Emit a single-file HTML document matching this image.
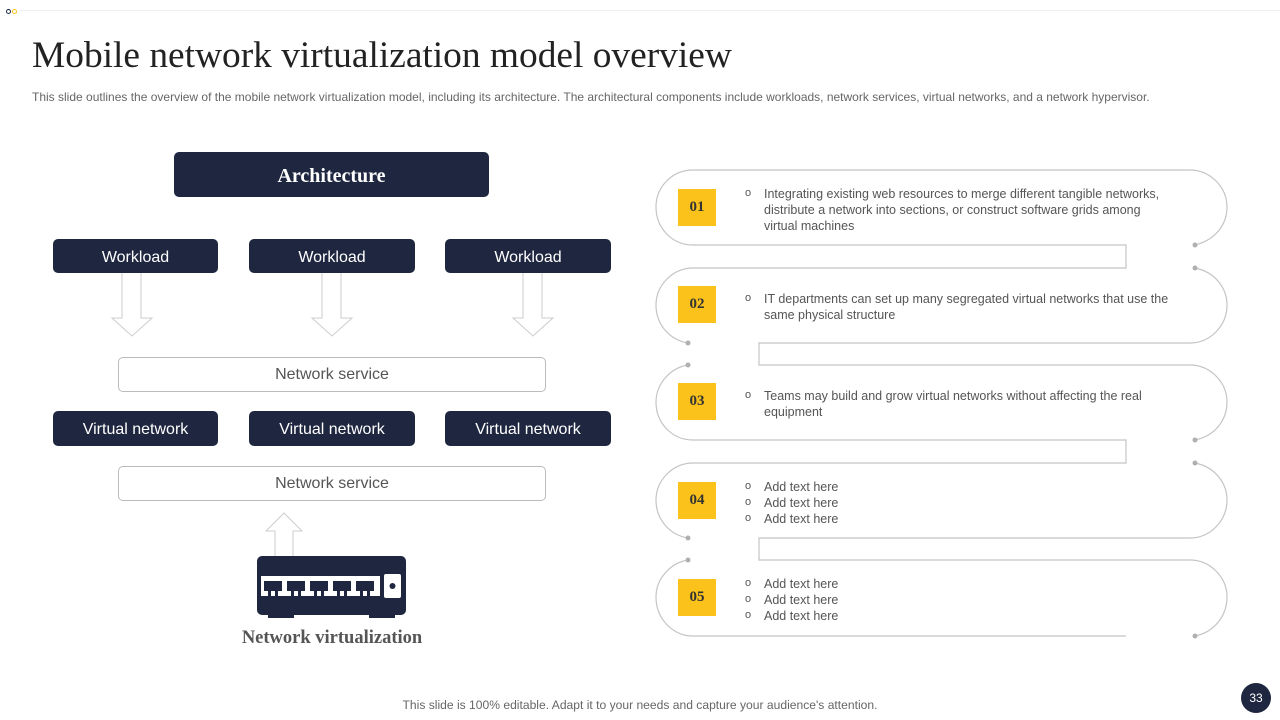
<!DOCTYPE html>
<html><head><meta charset="utf-8"><style>
body{margin:0;width:1280px;height:720px;background:#fff;position:relative;overflow:hidden;font-family:"Liberation Sans",sans-serif}
.a{position:absolute}
.nav{background:#1f2640;color:#fff;border-radius:5px;display:flex;align-items:center;justify-content:center;font-size:16px;box-sizing:border-box;padding-top:3px}
.ns{border:1px solid #bbb;border-radius:5px;color:#555;display:flex;align-items:center;justify-content:center;font-size:16px;background:#fff;box-sizing:border-box}
.y{background:#fbc21b;width:38px;height:37px;display:flex;align-items:center;justify-content:center;font-family:"Liberation Serif",serif;font-weight:bold;font-size:15px;color:#333}
.t{font-size:12.5px;color:#555;line-height:16px}
.t div{position:relative;padding-left:19px}
.t div:before{content:"o";position:absolute;left:0;font-size:11px;top:-1px}
</style></head><body>
<div class="a" style="left:20px;top:10px;width:1260px;height:1px;background:#eee"></div>
<div class="a" style="left:6px;top:9px;width:3px;height:3px;border:1px solid #1f2640;border-radius:50%"></div>
<div class="a" style="left:12px;top:9px;width:3px;height:3px;border:1px solid #fbc21b;border-radius:50%"></div>
<div class="a" style="left:32px;top:34px;font-family:'Liberation Serif',serif;font-size:37.4px;color:#222">Mobile network virtualization model overview</div>
<div class="a" style="left:32px;top:90px;font-size:12px;color:#666">This slide outlines the overview of the mobile network virtualization model, including its architecture. The architectural components include workloads, network services, virtual networks, and a network hypervisor.</div>

<div class="a nav" style="left:174px;top:152px;width:315px;height:45px;font-family:'Liberation Serif',serif;font-weight:bold;font-size:20px">Architecture</div>
<div class="a nav" style="left:53px;top:239px;width:165px;height:34px">Workload</div>
<div class="a nav" style="left:249px;top:239px;width:166px;height:34px">Workload</div>
<div class="a nav" style="left:445px;top:239px;width:166px;height:34px">Workload</div>
<svg class="a" style="left:0;top:0" width="640" height="720">
<g fill="#fff" stroke="#ccc" stroke-width="1">
<path d="M122,273 V318 H112 L132,336 L152,318 H141 V273"/>
<path d="M322,273 V318 H312 L332,336 L352,318 H341 V273"/>
<path d="M523,273 V318 H513 L533,336 L553,318 H542 V273"/>
<path d="M275,556 V531 H266 L284,513 L302,531 H293 V556"/>
</g>
<rect x="257" y="556" width="149" height="59" rx="5" fill="#1f2640"/>
<rect x="268" y="614" width="26" height="4" fill="#1f2640"/><rect x="369" y="614" width="26" height="4" fill="#1f2640"/>
<rect x="261" y="576" width="119" height="20" fill="#fff"/>
<g fill="#1f2640">
<rect x="264" y="581" width="18" height="10"/><rect x="287" y="581" width="18" height="10"/><rect x="310" y="581" width="18" height="10"/><rect x="333" y="581" width="18" height="10"/><rect x="356" y="581" width="18" height="10"/>
<rect x="268" y="591" width="3" height="5"/><rect x="275" y="591" width="3" height="5"/><rect x="291" y="591" width="3" height="5"/><rect x="298" y="591" width="3" height="5"/><rect x="314" y="591" width="3" height="5"/><rect x="321" y="591" width="3" height="5"/><rect x="337" y="591" width="3" height="5"/><rect x="344" y="591" width="3" height="5"/><rect x="360" y="591" width="3" height="5"/><rect x="367" y="591" width="3" height="5"/>
</g>
<rect x="384" y="574" width="17" height="24" rx="2" fill="#fff"/><circle cx="392.5" cy="586" r="3" fill="#1f2640"/>
</svg>
<div class="a ns" style="left:118px;top:357px;width:428px;height:35px">Network service</div>
<div class="a nav" style="left:53px;top:411px;width:165px;height:35px">Virtual network</div>
<div class="a nav" style="left:249px;top:411px;width:166px;height:35px">Virtual network</div>
<div class="a nav" style="left:445px;top:411px;width:166px;height:35px">Virtual network</div>
<div class="a ns" style="left:118px;top:466px;width:428px;height:35px">Network service</div>
<div class="a" style="left:182px;top:628px;width:300px;text-align:center;font-family:'Liberation Serif',serif;font-weight:bold;font-size:18.5px;color:#555">Network virtualization</div>

<svg class="a" style="left:0;top:0" width="1280" height="720">
<g fill="none" stroke="#c4c4c4" stroke-width="1.2">
<path d="M1195,245 C1215,240 1227,225 1227,207 C1227,187 1210,170 1190,170 L693,170 C672,170 656,187 656,207 C656,228 672,245 693,245 L1126,245 L1126,268 L693,268 C673,268 656,285 656,305 C656,325 670,340 688,343"/>
<path d="M1195,268 C1215,272 1227,288 1227,305 C1227,326 1210,343 1190,343 L759,343 L759,365 L1190,365 C1210,365 1227,382 1227,402 C1227,420 1215,436 1195,440"/>
<path d="M688,365 C670,368 656,384 656,402 C656,424 673,440 693,440 L1126,440 L1126,463 L693,463 C673,463 656,480 656,500 C656,520 670,535 688,538"/>
<path d="M1195,463 C1215,467 1227,483 1227,500 C1227,521 1210,538 1190,538 L759,538 L759,560 L1190,560 C1210,560 1227,577 1227,597 C1227,615 1215,632 1195,636"/>
<path d="M688,560 C670,563 656,579 656,597 C656,619 673,636 693,636 L1126,636"/>
</g>
<g fill="#b0b0b0">
<circle cx="1195" cy="245" r="2.5"/><circle cx="1195" cy="268" r="2.5"/><circle cx="688" cy="343" r="2.5"/><circle cx="688" cy="365" r="2.5"/><circle cx="1195" cy="440" r="2.5"/><circle cx="1195" cy="463" r="2.5"/><circle cx="688" cy="538" r="2.5"/><circle cx="688" cy="560" r="2.5"/><circle cx="1195" cy="636" r="2.5"/>
</g>
</svg>
<div class="a y" style="left:678px;top:189px">01</div>
<div class="a y" style="left:678px;top:286px">02</div>
<div class="a y" style="left:678px;top:383px">03</div>
<div class="a y" style="left:678px;top:482px">04</div>
<div class="a y" style="left:678px;top:579px">05</div>
<div class="a t" style="left:745px;top:186px;width:425px"><div>Integrating existing web resources to merge different tangible networks, distribute a network into sections, or construct software grids among virtual machines</div></div>
<div class="a t" style="left:745px;top:291px;width:445px"><div>IT departments can set up many segregated virtual networks that use the same physical structure</div></div>
<div class="a t" style="left:745px;top:388px;width:400px"><div>Teams may build and grow virtual networks without affecting the real equipment</div></div>
<div class="a t" style="left:745px;top:479px"><div>Add text here</div><div>Add text here</div><div>Add text here</div></div>
<div class="a t" style="left:745px;top:576px"><div>Add text here</div><div>Add text here</div><div>Add text here</div></div>

<div class="a" style="left:0;top:698px;width:1280px;text-align:center;font-size:12.1px;color:#666">This slide is 100% editable. Adapt it to your needs and capture your audience's attention.</div>
<div class="a" style="left:1241px;top:683px;width:30px;height:30px;border-radius:50%;background:#1f2640;color:#fff;font-size:12px;display:flex;align-items:center;justify-content:center">33</div>
</body></html>
